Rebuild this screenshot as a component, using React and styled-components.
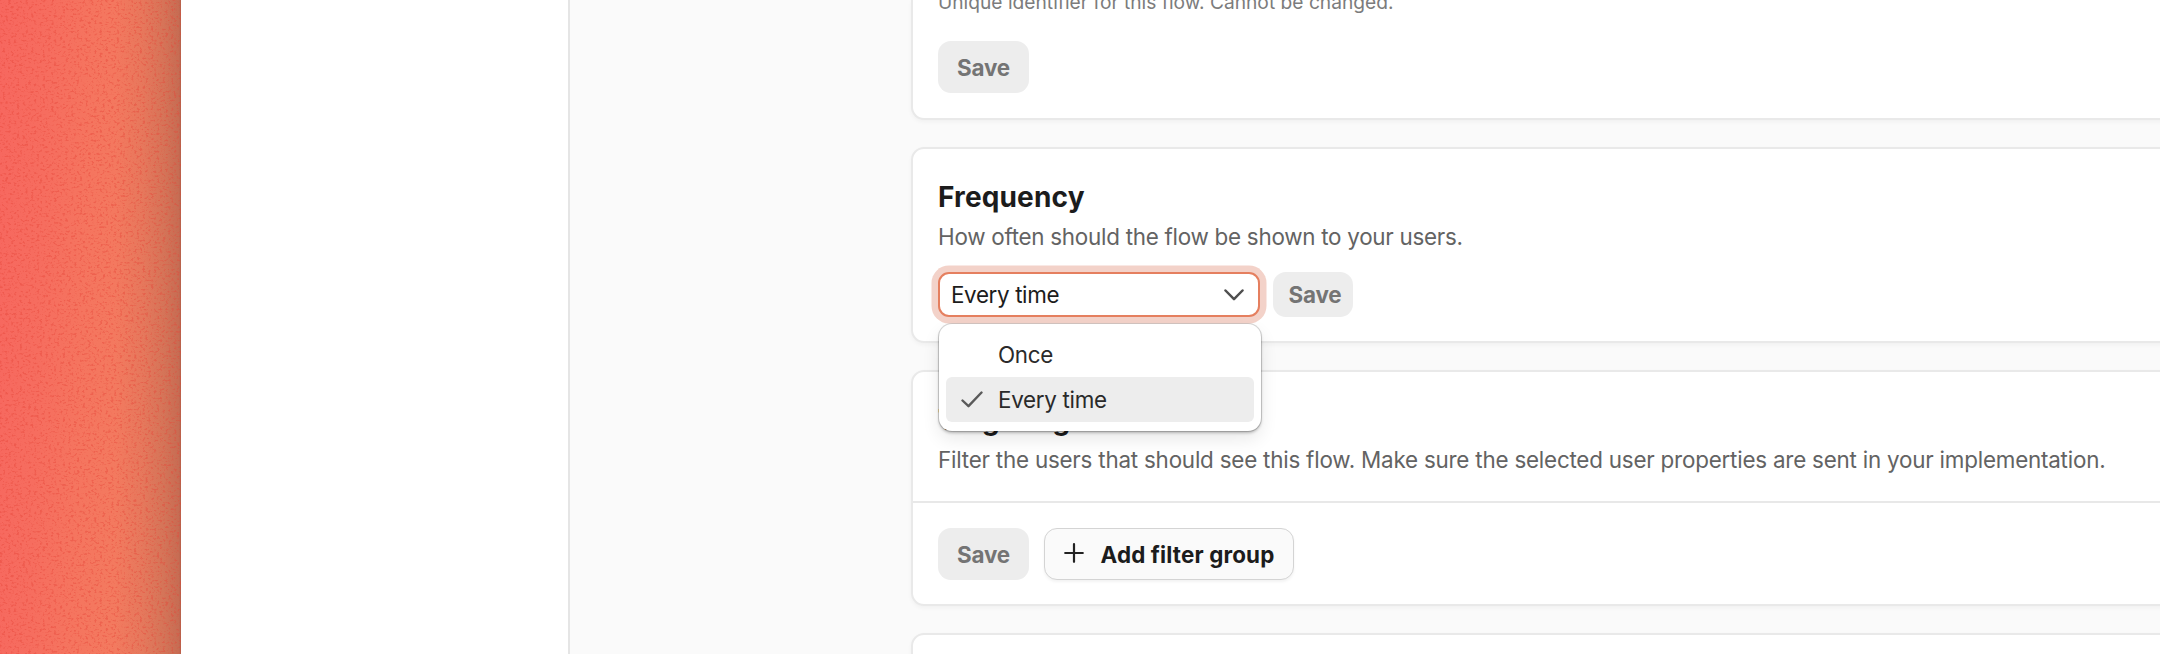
import React from "react";
import styled, { createGlobalStyle, css } from "styled-components";

const GlobalStyle = createGlobalStyle`
  * { box-sizing: border-box; }
  body { margin: 0; background: #fafafa; overflow: hidden; }
`;

const Screen = styled.div`
  display: flex;
  width: 2160px;
  height: 654px;
  overflow: hidden;
  background: #fafafa;
  font-family: Inter, "Liberation Sans", sans-serif;
  color: #1c1c1c;
`;

const Wallpaper = styled.div`
  flex: none;
  width: 181px;
  display: grid;
  background:
    linear-gradient(90deg, transparent 115px, rgba(90, 75, 50, 0.07) 142px, rgba(90, 75, 50, 0.17) 163px, rgba(85, 60, 45, 0.26) 179px, rgba(85, 50, 40, 0.38) 181px),
    linear-gradient(92deg, #f7675f 0, #f66d5f 50px, #f5755f 95px, #f37a5f 135px, #ee7d60 181px);
`;

const Grain = styled.svg`
  width: 100%;
  height: 100%;
`;

const Sidebar = styled.aside`
  flex: none;
  width: 389px;
  background: #fff;
  border-right: 2px solid #e5e5e5;
`;

const Main = styled.main`
  flex: none;
  width: 1590px;
  height: 654px;
  padding-left: 341px;
  display: flex;
  flex-direction: column;
  gap: 27px;
  overflow: hidden;
`;

const Card = styled.section`
  flex: none;
  width: 1400px;
  height: ${(p) => p.$height}px;
  background: #fff;
  border: 2px solid #e9e9e9;
  border-radius: 13px;
  box-shadow: 0 2px 4px rgba(0, 0, 0, 0.04);
  padding: ${(p) => p.$top}px 25px 0;
  ${(p) => p.$cut && css`
    border-top: 0;
    border-top-left-radius: 0;
  `}
`;

const Title = styled.h2`
  margin: 0;
  font-size: 28px;
  line-height: 40px;
  font-weight: 700;
  letter-spacing: 0.15px;
  white-space: nowrap;
`;

const Description = styled.p`
  margin: 2px 0 0;
  padding-top: 1px;
  font-size: 22.4px;
  line-height: 34px;
  color: #636363;
  white-space: nowrap;
  letter-spacing: ${(p) => p.$tracking}px;
`;

const Hint = styled.p`
  margin: 0;
  font-size: 19.2px;
  line-height: 26px;
  color: #7c7c7c;
  white-space: nowrap;
`;

const Row = styled.div`
  display: flex;
  gap: ${(p) => p.$gap || 0}px;
  margin-top: ${(p) => p.$top}px;
`;

const Button = styled.button`
  display: flex;
  align-items: center;
  justify-content: center;
  gap: 17px;
  flex: none;
  width: ${(p) => p.$width}px;
  height: 52px;
  padding: 2px 0 0;
  border: 0;
  border-radius: 13px;
  background: #ededed;
  color: #747474;
  font-family: inherit;
  font-size: 22.4px;
  font-weight: 700;
  line-height: 34px;
  letter-spacing: -0.1px;
  white-space: nowrap;
  ${(p) => p.$compact && css`
    height: 45px;
    padding: 0 0 0 4px;
  `}
  ${(p) => p.$outlined && css`
    border: 1.6px solid #d4d4d4;
    background: #fafafa;
    color: #1c1c1c;
    letter-spacing: 0.15px;
    box-shadow: 0 2px 3px rgba(0, 0, 0, 0.05);
  `}
`;

const SelectWrap = styled.div`
  position: relative;
  width: 322px;
`;

const SelectBox = styled.div`
  display: flex;
  align-items: center;
  justify-content: space-between;
  height: 45px;
  padding: 0 14px 0 11px;
  border: 2px solid #e57f5f;
  border-radius: 11px;
  background: #fff;
  box-shadow: 0 0 0 6.5px #f3d2c9;
  font-size: 22.4px;
  line-height: 34px;
  letter-spacing: -0.36px;
`;

const Menu = styled.ul`
  position: absolute;
  top: 52px;
  left: 1px;
  z-index: 2;
  width: 322px;
  height: 107px;
  margin: 0;
  padding: 8px 7px;
  list-style: none;
  background: #fff;
  border-radius: 13px;
  box-shadow: 0 0 0 1px rgba(0, 0, 0, 0.15), 0 2px 3px rgba(0, 0, 0, 0.25), 0 8px 18px rgba(0, 0, 0, 0.09);
`;

const Option = styled.li`
  display: flex;
  align-items: center;
  height: 45px;
  border-radius: 6px;
  font-size: 22.4px;
  line-height: 34px;
  letter-spacing: -0.3px;
  color: #2a2a2a;
  background: ${(p) => (p.$selected ? "#ededed" : "transparent")};
`;

const OptionIcon = styled.span`
  display: flex;
  justify-content: center;
  width: 52px;
`;

const Divider = styled.hr`
  margin: 24px -25px 0;
  border: 0;
  height: 2px;
  background: #e8e8e8;
`;

const ChevronIcon = () => (
  <svg width="20" height="12" viewBox="0 0 20 12" fill="none" stroke="#4f4f4f" strokeWidth="2.5" strokeLinecap="round" strokeLinejoin="round">
    <path d="M1.500 1.500 10 10.200l8.500-8.700" />
  </svg>
);

const CheckIcon = () => (
  <svg width="22" height="17" viewBox="0 0 22 17" fill="none" stroke="#5a5a5a" strokeWidth="2.400" strokeLinecap="round" strokeLinejoin="round">
    <path d="M1.500 9.500 7.500 15.200 20.500 1.500" />
  </svg>
);

const PlusShape = styled.svg`
  margin-top: -4px;
`;

const PlusIcon = () => (
  <PlusShape width="20" height="20" viewBox="0 0 20 20" fill="none" stroke="#222" strokeWidth="2.2" strokeLinecap="round">
    <path d="M10 1.200v17.600M1.200 10h17.600" />
  </PlusShape>
);

export default function App() {
  return (
    <Screen>
      <GlobalStyle />
      <Wallpaper>
        <Grain>
          <filter id="grain" x="0" y="0" width="100%" height="100%" colorInterpolationFilters="sRGB">
            <feTurbulence type="fractalNoise" baseFrequency="0.35 0.45" numOctaves="2" seed="4" />
            <feColorMatrix values="0 0 0 0 0.9  0 0 0 0 0.27  0 0 0 0 0.22  5 0 0 0 -2.65" />
          </filter>
          <rect width="100%" height="100%" filter="url(#grain)" opacity="0.42" />
        </Grain>
      </Wallpaper>
      <Sidebar />
      <Main>
        <Card $height={120} $top={0} $cut>
          <Row $top={-11}><Hint>Unique identifier for this flow. Cannot be changed.</Hint></Row>
          <Row $top={26}><Button $width={91}>Save</Button></Row>
        </Card>
        <Card $height={196} $top={28}>
          <Title>Frequency</Title>
          <Description $tracking={-0.26}>How often should the flow be shown to your users.</Description>
          <Row $top={18} $gap={13}>
            <SelectWrap>
              <SelectBox>Every time<ChevronIcon /></SelectBox>
              <Menu>
                <Option><OptionIcon />Once</Option>
                <Option $selected><OptionIcon><CheckIcon /></OptionIcon>Every time</Option>
              </Menu>
            </SelectWrap>
            <Button $width={80} $compact>Save</Button>
          </Row>
        </Card>
        <Card $height={236} $top={28}>
          <Title>Targeting</Title>
          <Description $tracking={-0.21}>Filter the users that should see this flow. Make sure the selected user properties are sent in your implementation.</Description>
          <Divider />
          <Row $top={25} $gap={15}>
            <Button $width={91}>Save</Button>
            <Button $width={250} $outlined><PlusIcon />Add filter group</Button>
          </Row>
        </Card>
        <Card $height={200} $top={28} />
      </Main>
    </Screen>
  );
}
